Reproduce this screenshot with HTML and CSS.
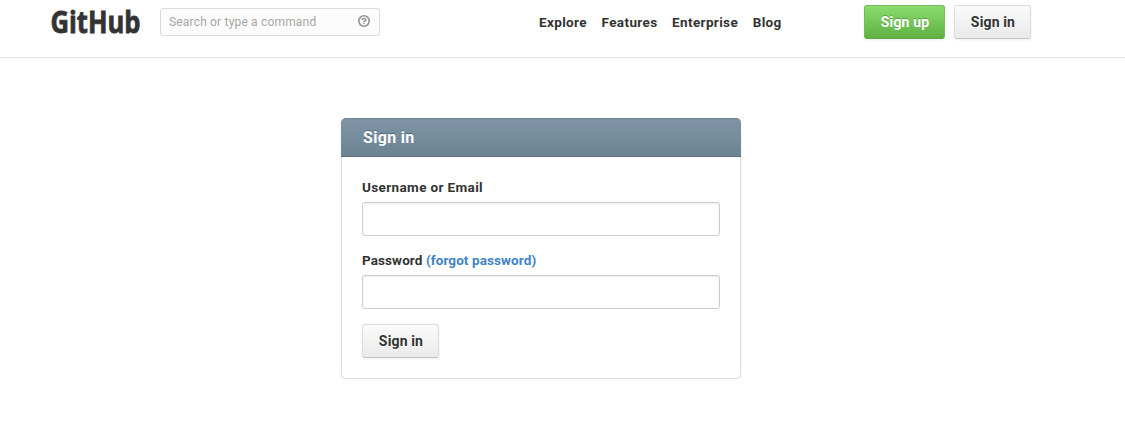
FILE: index.html
```html
<!DOCTYPE html>
<html lang="en">
<head>
<meta charset="utf-8">
<title>Sign in · GitHub</title>
<link rel="stylesheet" href="styles.css">
</head>
<body>
<header class="header">
  <a class="logo" href="#"><svg width="110" height="50" viewBox="0 0 110 50"><text x="0.5" y="33.2" textLength="90" lengthAdjust="spacingAndGlyphs">GitHub</text></svg></a>
  <div class="search">
    <span class="search-hint">Search or type a command</span>
    <svg width="12" height="12" viewBox="0 0 12 12" fill="none" stroke="#929292"><circle cx="6" cy="6" r="5.2" stroke-width="1.6"/><path d="M4.1 5C4.1 3 7.9 3 7.9 4.8C7.9 6 6 5.8 6 7.1M6 7.8v1.2" stroke-width="1.5"/></svg>
  </div>
  <nav class="nav">
    <a href="#">Explore</a>
    <a href="#">Features</a>
    <a href="#">Enterprise</a>
    <a href="#">Blog</a>
  </nav>
  <a class="button primary" href="#">Sign up</a>
  <a class="button" href="#">Sign in</a>
</header>
<main class="card">
  <h1 class="card-title">Sign in</h1>
  <form class="card-body">
    <label class="label user" for="login">Username or Email</label>
    <input class="field" id="login" type="text">
    <label class="label" for="password">Password <a class="forgot" href="#">(forgot password)</a></label>
    <input class="field" id="password" type="password">
    <button class="button" type="button">Sign in</button>
  </form>
</main>
</body>
</html>
```

FILE: styles.css
```css
* { box-sizing: border-box; }
body {
  margin: 0;
  background: #fff;
  color: #333;
  font: bold 13px/18px Roboto, "Liberation Sans", sans-serif;
}
a { color: inherit; text-decoration: none; }
.header {
  display: flex;
  align-items: flex-start;
  height: 58px;
  padding-left: 50px;
  border-bottom: 1px solid #e5e5e5;
}
.logo { width: 110px; height: 50px; }
.logo svg { display: block; overflow: visible; }
.logo text {
  font: bold 30px "Open Sans", sans-serif;
  fill: #333;
  stroke: #333;
  stroke-width: 0.8px;
}
.search {
  display: flex;
  align-items: center;
  justify-content: space-between;
  width: 220px;
  height: 28px;
  margin-top: 8px;
  padding: 0 9px 0 8px;
  background: #fcfcfc;
  border: 1px solid #dadada;
  border-radius: 3px;
}
.search-hint {
  color: #a6a6a6;
  font-size: 12px;
  font-weight: normal;
  letter-spacing: 0.18px;
}
.search svg { margin-top: -2px; }
.nav {
  display: flex;
  gap: 14.6px;
  width: 325px;
  margin: 13px 0 0 159px;
  font-size: 13.5px;
  letter-spacing: 0.37px;
}
.button {
  display: block;
  width: 77px;
  height: 34px;
  padding: 0 0 0 1px;
  background: linear-gradient(#fafafa, #eaeaea);
  border: 1px solid #ddd;
  border-bottom-color: #c5c5c5;
  border-radius: 3px;
  box-shadow: 0 1px 3px rgba(0, 0, 0, 0.075);
  color: #333;
  font: bold 14px/33px Roboto, "Liberation Sans", sans-serif;
  letter-spacing: 0.15px;
  text-align: center;
  text-shadow: 0 1px 0 rgba(255, 255, 255, 0.9);
}
.header .button { margin-top: 5px; }
.header .primary {
  width: 81px;
  margin-right: 9px;
  background: linear-gradient(#8add6d, #60b044);
  border-color: #74bb5a;
  border-bottom-color: #5ca941;
  color: #fff;
  text-shadow: 0 -1px 0 rgba(0, 0, 0, 0.25);
}
.card {
  width: 400px;
  margin: 60px 0 0 341px;
  border: 1px solid #d8dee2;
  border-top: 0;
  border-radius: 5px;
  box-shadow: 0 1px 3px rgba(0, 0, 0, 0.075);
}
.card-title {
  height: 39px;
  margin: 0 -1px;
  padding-left: 22px;
  background: linear-gradient(#7f95a7, #6b8492);
  border: 1px solid #6c8393;
  border-bottom-color: #5d6f7d;
  border-width: 1px 0;
  border-radius: 5px 5px 0 0;
  color: #fff;
  font-size: 16px;
  letter-spacing: 0.3px;
  line-height: 37px;
  text-shadow: 0 -1px 0 rgba(0, 0, 0, 0.3);
}
.card-body {
  height: 221px;
  padding: 21px 20px 0;
}
.label {
  display: block;
  height: 18px;
  margin-bottom: 6px;
  font-size: 13.5px;
  line-height: 19px;
  letter-spacing: 0.1px;
}
.user { letter-spacing: 0.37px; }
.forgot { color: #4183c4; }
.field {
  display: block;
  width: 358px;
  height: 34px;
  margin-bottom: 15px;
  border: 1px solid #ccc;
  border-radius: 3px;
  box-shadow: inset 0 1px 2px rgba(0, 0, 0, 0.075);
}
```
